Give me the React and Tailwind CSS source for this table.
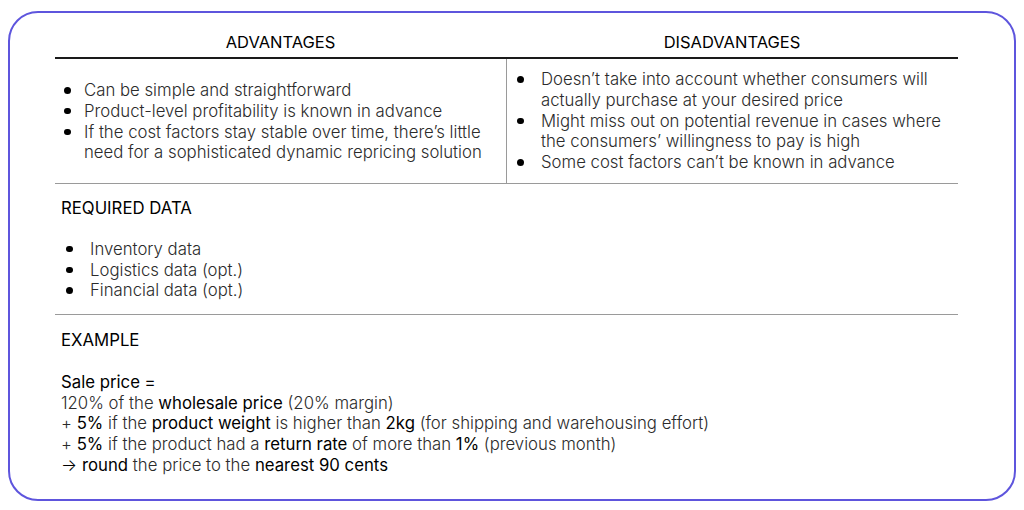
const FONT = { fontFamily: "Inter, 'Noto Sans', sans-serif" };

function Bullet({ children, textX = 21, dotLeft = 5 }) {
  return (
    <li className="flex items-start">
      <span className="flex h-[20.75px] shrink-0 items-center" style={{ width: textX }}>
        <span className="h-[6.5px] w-[6.5px] rounded-full bg-black" style={{ marginLeft: dotLeft }} />
      </span>
      <span className="whitespace-nowrap">{children}</span>
    </li>
  );
}

function B({ children }) {
  return <span className="font-normal text-black">{children}</span>;
}

export default function App() {
  return (
    <div className="h-[510px] w-[1024px] bg-white" style={FONT}>
      <div className="ml-[8px] pt-[11px]">
        <div className="h-[490px] w-[1008px] rounded-[30px] border-2 border-[#5e55dd] pl-[45px]">
          <div className="w-[903px] text-[16.75px] leading-[20.75px] font-light text-[#2b2b2b]">
            <div className="flex h-[46px] items-end border-b-2 border-[#1a1a1a] pb-[4px] text-[16.5px] font-normal text-black">
              <div className="w-[451px] text-center">ADVANTAGES</div>
              <div className="flex-1 text-center">DISADVANTAGES</div>
            </div>

            <div className="flex h-[125px] border-b border-[#9a9a9a]">
              <div className="flex w-[452px] items-center border-r border-[#9a9a9a] pl-[4px]">
                <ul className="mt-[1px]">
                  <Bullet textX={25}>Can be simple and straightforward</Bullet>
                  <Bullet textX={25}>Product-level profitability is known in advance</Bullet>
                  <Bullet textX={25}>
                    If the cost factors stay stable over time, there’s little
                    <br />
                    need for a sophisticated dynamic repricing solution
                  </Bullet>
                </ul>
              </div>
              <div className="flex flex-1 items-center pl-[5px]">
                <ul>
                  <Bullet textX={29}>
                    Doesn’t take into account whether consumers will
                    <br />
                    actually purchase at your desired price
                  </Bullet>
                  <Bullet textX={29}>
                    Might miss out on potential revenue in cases where
                    <br />
                    the consumers’ willingness to pay is high
                  </Bullet>
                  <Bullet textX={29}>Some cost factors can’t be known in advance</Bullet>
                </ul>
              </div>
            </div>

            <div className="h-[131px] border-b border-[#9a9a9a] pl-[6px] pt-[14px]">
              <div className="font-normal text-black">REQUIRED DATA</div>
              <ul className="mt-[20px]">
                <Bullet textX={29}>Inventory data</Bullet>
                <Bullet textX={29}>Logistics data (opt.)</Bullet>
                <Bullet textX={29}>Financial data (opt.)</Bullet>
              </ul>
            </div>

            <div className="pl-[6px] pt-[15px]">
              <div className="font-normal text-black">EXAMPLE</div>
              <div className="mt-[21px]">
                <div className="font-normal text-black">Sale price =</div>
                <div>
                  120% of the <B>wholesale price</B> (20% margin)
                </div>
                <div>
                  + <B>5%</B> if the <B>product weight</B> is higher than <B>2kg</B> (for shipping and warehousing effort)
                </div>
                <div>
                  + <B>5%</B> if the product had a <B>return rate</B> of more than <B>1%</B> (previous month)
                </div>
                <div>
                  <span className="inline-block w-[21px] text-black">→</span>
                  <B>round</B> the price to the <B>nearest 90 cents</B>
                </div>
              </div>
            </div>
          </div>
        </div>
      </div>
    </div>
  );
}
